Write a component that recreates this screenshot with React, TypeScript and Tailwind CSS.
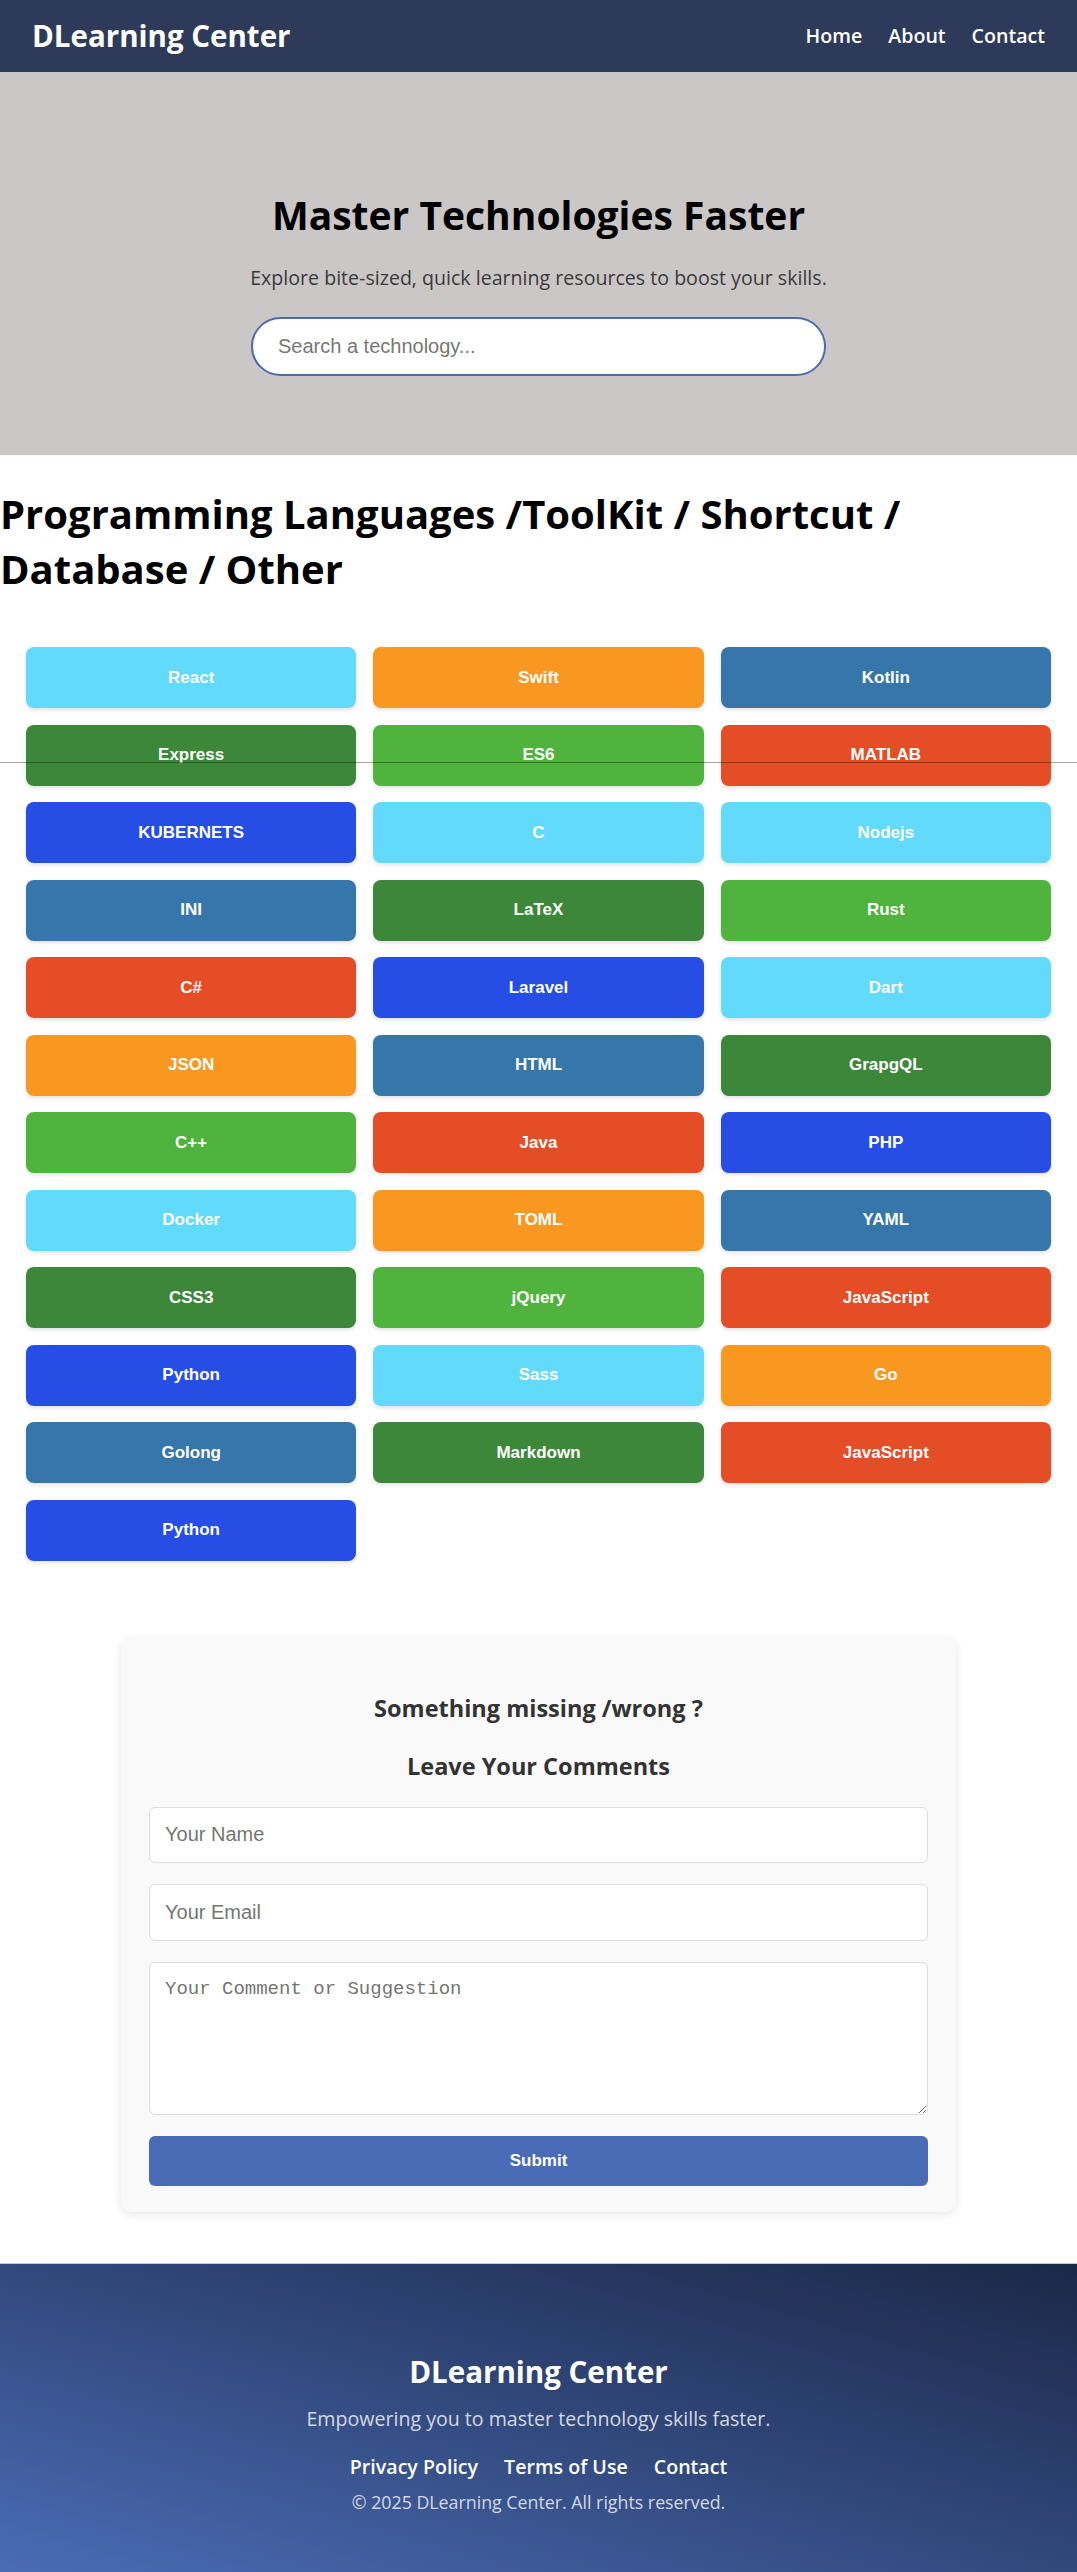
import React from "react";

const CYAN = "bg-[#61dafb]";
const ORANGE = "bg-[#f89820]";
const STEEL = "bg-[#3776ab]";
const DKGREEN = "bg-[#3c873a]";
const GREEN = "bg-[#4fb33e]";
const RED = "bg-[#e44d26]";
const BLUE = "bg-[#264de4]";

const techs: { name: string; color: string }[] = [
  { name: "React", color: CYAN },
  { name: "Swift", color: ORANGE },
  { name: "Kotlin", color: STEEL },
  { name: "Express", color: DKGREEN },
  { name: "ES6", color: GREEN },
  { name: "MATLAB", color: RED },
  { name: "KUBERNETS", color: BLUE },
  { name: "C", color: CYAN },
  { name: "Nodejs", color: CYAN },
  { name: "INI", color: STEEL },
  { name: "LaTeX", color: DKGREEN },
  { name: "Rust", color: GREEN },
  { name: "C#", color: RED },
  { name: "Laravel", color: BLUE },
  { name: "Dart", color: CYAN },
  { name: "JSON", color: ORANGE },
  { name: "HTML", color: STEEL },
  { name: "GrapgQL", color: DKGREEN },
  { name: "C++", color: GREEN },
  { name: "Java", color: RED },
  { name: "PHP", color: BLUE },
  { name: "Docker", color: CYAN },
  { name: "TOML", color: ORANGE },
  { name: "YAML", color: STEEL },
  { name: "CSS3", color: DKGREEN },
  { name: "jQuery", color: GREEN },
  { name: "JavaScript", color: RED },
  { name: "Python", color: BLUE },
  { name: "Sass", color: CYAN },
  { name: "Go", color: ORANGE },
  { name: "Golong", color: STEEL },
  { name: "Markdown", color: DKGREEN },
  { name: "JavaScript", color: RED },
  { name: "Python", color: BLUE },
];

export default function App() {
  return (
    <div className="relative min-h-[2572px] bg-white font-['Open_Sans',sans-serif]">
      {/* top bar */}
      <header className="h-[72px] bg-[#2e3a59] flex items-center justify-between px-8 text-white">
        <div className="text-[29.5px] font-bold leading-none">DLearning Center</div>
        <nav className="flex gap-[26px] text-[19.6px] font-semibold">
          <a href="#">Home</a>
          <a href="#">About</a>
          <a href="#">Contact</a>
        </nav>
      </header>

      {/* hero */}
      <section className="bg-[#cbc7c7] pt-[119px] pb-[79px] flex flex-col items-center">
        <h1 className="text-[39px] leading-[48px] font-bold text-black">
          Master Technologies Faster
        </h1>
        <p className="mt-[25px] text-[19.6px] leading-[28px] text-[#3a3a3a]">
          Explore bite-sized, quick learning resources to boost your skills.
        </p>
        <input
          type="text"
          placeholder="Search a technology..."
          className="mt-[25px] w-[575px] h-[59px] rounded-full border-2 border-[#4d6aab] bg-white px-[25px] text-[20px] font-['Liberation_Sans',sans-serif] placeholder:text-[#777] outline-none"
        />
      </section>

      {/* categories */}
      <h2 className="mt-[31px] text-[40px] leading-[55px] font-bold text-black pr-[160px]">
        Programming Languages /ToolKit / Shortcut / Database / Other
      </h2>

      <div className="mt-[51px] px-[26px] grid grid-cols-3 gap-x-[17px] gap-y-[16.5px]">
        {techs.map((t, i) => (
          <button
            key={i}
            className={`${t.color} h-[61px] rounded-lg text-white font-bold text-[17px] font-['Liberation_Sans',sans-serif] shadow-[0_2px_4px_rgba(0,0,0,0.12)]`}
          >
            {t.name}
          </button>
        ))}
      </div>

      {/* feedback */}
      <div className="mt-[77px] mx-auto w-[835px] bg-[#f9f9f9] rounded-[10px] shadow-[0_2px_10px_rgba(0,0,0,0.1)] px-[28px] pt-[52px] pb-[26px]">
        <h3 className="text-center text-[23.5px] leading-[36px] font-bold text-[#333]">
          Something missing /wrong ?
        </h3>
        <h3 className="mt-[22px] text-center text-[23.5px] leading-[36px] font-bold text-[#333]">
          Leave Your Comments
        </h3>
        <form className="mt-[23px] flex flex-col gap-[21px]">
          <input
            type="text"
            placeholder="Your Name"
            className="h-[56px] rounded-md border border-[#ddd] bg-white px-[15px] text-[20px] font-['Liberation_Sans',sans-serif] placeholder:text-[#757575] outline-none"
          />
          <input
            type="email"
            placeholder="Your Email"
            className="h-[57px] rounded-md border border-[#ddd] bg-white px-[15px] text-[20px] font-['Liberation_Sans',sans-serif] placeholder:text-[#757575] outline-none"
          />
          <textarea
            placeholder="Your Comment or Suggestion"
            className="h-[153px] rounded-md border border-[#ddd] bg-white px-[15px] py-[12px] text-[19px] font-['Liberation_Mono',monospace] placeholder:text-[#757575] outline-none"
          />
          <button
            type="button"
            className="h-[50px] rounded-md bg-[#4a6bb5] text-white font-bold text-[17px] font-['Liberation_Sans',sans-serif]"
          >
            Submit
          </button>
        </form>
      </div>

      {/* footer */}
      <footer className="mt-[51px] h-[310px] border-t border-[#c3cbdc] bg-linear-to-tr from-[#4a6cb6] to-[#1b2848] text-center text-white pt-[90px]">
        <div className="text-[29.5px] leading-[35px] font-bold">DLearning Center</div>
        <p className="mt-[18px] text-[19.6px] leading-[24px] text-[#d4d8e2]">
          Empowering you to master technology skills faster.
        </p>
        <div className="mt-[23px] flex justify-center gap-[26px] text-[19.6px] leading-[26px] font-semibold">
          <a href="#">Privacy Policy</a>
          <a href="#">Terms of Use</a>
          <a href="#">Contact</a>
        </div>
        <p className="mt-[10px] text-[17.8px] leading-[24px] text-[#d4d8e2]">
          © 2025 DLearning Center. All rights reserved.
        </p>
      </footer>

      {/* stray divider line laid over the grid */}
      <div className="absolute left-0 right-0 top-[762px] h-px bg-black/35" />
    </div>
  );
}
